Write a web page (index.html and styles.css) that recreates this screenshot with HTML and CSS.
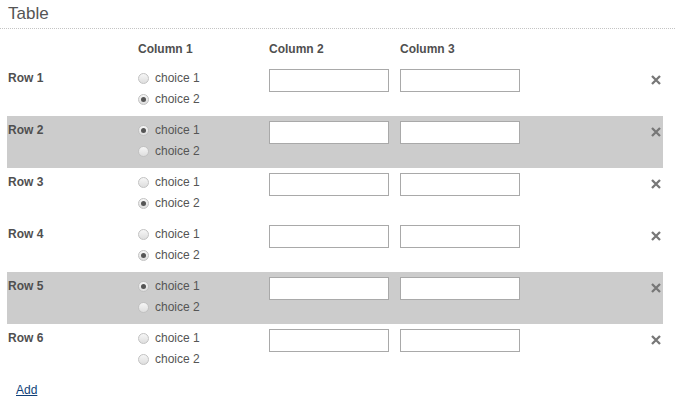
FILE: index.html
```html
<!DOCTYPE html>
<html>
<head>
<meta charset="utf-8">
<link rel="stylesheet" href="styles.css">
</head>
<body>
<div class="title">Table</div>
<div class="table">
  <div class="row head">
    <div></div>
    <div class="th">Column 1</div>
    <div class="th">Column 2</div>
    <div class="th">Column 3</div>
    <div></div>
  </div>

  <div class="row">
    <div class="label">Row 1</div>
    <div class="choices"><div class="choice"><span class="radio"></span>choice 1</div><div class="choice"><span class="radio on"></span>choice 2</div></div>
    <div class="cell"><span class="input"></span></div>
    <div class="cell"><span class="input"></span></div>
    <div class="del"><svg width="10" height="10" viewBox="0 0 10 10"><path d="M1 1L9 9M9 1L1 9" stroke="#777" stroke-width="2.3"/></svg></div>
  </div>

  <div class="row alt">
    <div class="label">Row 2</div>
    <div class="choices"><div class="choice"><span class="radio on"></span>choice 1</div><div class="choice"><span class="radio"></span>choice 2</div></div>
    <div class="cell"><span class="input"></span></div>
    <div class="cell"><span class="input"></span></div>
    <div class="del"><svg width="10" height="10" viewBox="0 0 10 10"><path d="M1 1L9 9M9 1L1 9" stroke="#777" stroke-width="2.3"/></svg></div>
  </div>

  <div class="row">
    <div class="label">Row 3</div>
    <div class="choices"><div class="choice"><span class="radio"></span>choice 1</div><div class="choice"><span class="radio on"></span>choice 2</div></div>
    <div class="cell"><span class="input"></span></div>
    <div class="cell"><span class="input"></span></div>
    <div class="del"><svg width="10" height="10" viewBox="0 0 10 10"><path d="M1 1L9 9M9 1L1 9" stroke="#777" stroke-width="2.3"/></svg></div>
  </div>

  <div class="row">
    <div class="label">Row 4</div>
    <div class="choices"><div class="choice"><span class="radio"></span>choice 1</div><div class="choice"><span class="radio on"></span>choice 2</div></div>
    <div class="cell"><span class="input"></span></div>
    <div class="cell"><span class="input"></span></div>
    <div class="del"><svg width="10" height="10" viewBox="0 0 10 10"><path d="M1 1L9 9M9 1L1 9" stroke="#777" stroke-width="2.3"/></svg></div>
  </div>

  <div class="row alt">
    <div class="label">Row 5</div>
    <div class="choices"><div class="choice"><span class="radio on"></span>choice 1</div><div class="choice"><span class="radio"></span>choice 2</div></div>
    <div class="cell"><span class="input"></span></div>
    <div class="cell"><span class="input"></span></div>
    <div class="del"><svg width="10" height="10" viewBox="0 0 10 10"><path d="M1 1L9 9M9 1L1 9" stroke="#777" stroke-width="2.3"/></svg></div>
  </div>

  <div class="row">
    <div class="label">Row 6</div>
    <div class="choices"><div class="choice"><span class="radio"></span>choice 1</div><div class="choice"><span class="radio"></span>choice 2</div></div>
    <div class="cell"><span class="input"></span></div>
    <div class="cell"><span class="input"></span></div>
    <div class="del"><svg width="10" height="10" viewBox="0 0 10 10"><path d="M1 1L9 9M9 1L1 9" stroke="#777" stroke-width="2.3"/></svg></div>
  </div>
</div>
<div class="footer"><a class="add" href="#">Add</a></div>
</body>
</html>
```

FILE: styles.css
```css
html, body {
  margin: 0;
  padding: 0;
  background: #fff;
}
body {
  font-family: "Liberation Sans", Arial, sans-serif;
  font-size: 12px;
  color: #555;
}
.title {
  font-size: 17px;
  line-height: 20px;
  padding: 4px 8px 4px;
  color: #555;
  border-bottom: 1px dotted #c4c4c4;
}
.table {
  margin: 0 12px 0 7px;
}
.row {
  display: grid;
  grid-template-columns: 131px 131px 131px 1fr 20px;
  height: 52px;
  box-sizing: border-box;
  padding-top: 4px;
}
.row.head {
  height: 35px;
  padding-top: 10px;
}
.row.alt {
  background: #cccccc;
}
.th {
  font-weight: bold;
  line-height: 21px;
  color: #4f4f4f;
}
.label {
  font-weight: bold;
  line-height: 21px;
  padding-left: 1px;
  color: #4f4f4f;
}
.choices {
  display: flex;
  flex-direction: column;
}
.choice {
  display: flex;
  align-items: center;
  gap: 6px;
  height: 21px;
  line-height: 21px;
  color: #555;
}
.radio {
  width: 11px;
  height: 11px;
  box-sizing: border-box;
  border-radius: 50%;
  border: 1px solid #c2c2c2;
  background: linear-gradient(#f6f6f6, #dedede);
  display: flex;
  align-items: center;
  justify-content: center;
  margin-left: 0;
}
.radio.on::after {
  content: "";
  width: 5px;
  height: 5px;
  border-radius: 50%;
  background: #555;
}
.cell {
  padding-top: 1px;
}
.input {
  display: block;
  width: 120px;
  height: 23px;
  box-sizing: border-box;
  border: 1px solid #a9a9a9;
  background: #fff;
}
.del {
  display: flex;
  justify-content: flex-end;
  padding-right: 2px;
  padding-top: 7px;
}
.del svg {
  display: block;
}
.footer {
  padding: 7px 16px;
}
.add {
  font-size: 12px;
  color: #0f3f78;
  text-decoration: underline;
}
```
